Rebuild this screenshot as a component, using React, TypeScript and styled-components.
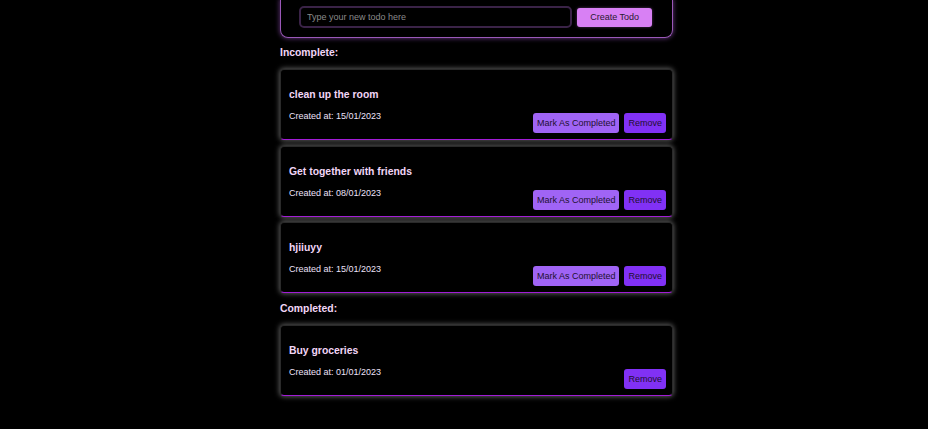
import React from "react";
import styled, { createGlobalStyle } from "styled-components";

const Global = createGlobalStyle`
  html, body { margin: 0; padding: 0; background: #000; }
  body { font-family: "Liberation Sans", Arial, sans-serif; overflow: hidden; }
`;

const Page = styled.div`
  width: 928px;
  height: 429px;
  background: #000;
  display: flex;
  justify-content: center;
`;

const Column = styled.div`
  width: 393px;
  margin-left: 25px;
  display: flex;
  flex-direction: column;
`;

const FormPanel = styled.form`
  display: flex;
  align-items: center;
  gap: 5px;
  padding: 6px 20px 9px 18px;
  border: 1px solid #9a58b8;
  border-top: none;
  border-radius: 0 0 8px 8px;
  box-shadow: 0 0 4px 1px rgba(170, 90, 210, 0.45);
  margin: 0 0 8px;
`;

const TodoInput = styled.input`
  box-sizing: border-box;
  width: 274px;
  height: 22px;
  background: #000;
  border: 2px solid #3a2347;
  border-radius: 5px;
  padding: 0 6px;
  color: #ddd;
  font-family: "Liberation Sans", Arial, sans-serif;
  font-size: 9px;
  outline: none;
  &::placeholder { color: #8a8a8a; }
`;

const CreateButton = styled.button`
  box-sizing: border-box;
  width: 75px;
  height: 19px;
  border: none;
  border-radius: 3px;
  background: #d880f4;
  color: #2a1a30;
  font-family: "Liberation Sans", Arial, sans-serif;
  font-size: 9px;
  padding: 0;
  box-shadow: 0 0 3px rgba(216, 128, 244, 0.4);
`;

const SectionTitle = styled.h2<{ $top: number }>`
  margin: ${(p) => p.$top}px 0 9px 0;
  font-size: 10.4px;
  line-height: 14px;
  font-weight: bold;
  color: #f2d6f7;
`;

const List = styled.div`
  display: flex;
  flex-direction: column;
  gap: 5.5px;
`;

const Card = styled.div`
  box-sizing: border-box;
  height: 71px;
  display: flex;
  justify-content: space-between;
  align-items: flex-end;
  padding: 18px 6px 6px 8px;
  background: #000;
  border: 1px solid #2a2a2a;
  border-bottom: 1px solid #a21cd6;
  border-radius: 4px;
  box-shadow: 0 0 5px 1px rgba(160, 160, 160, 0.55);
`;

const Info = styled.div`
  align-self: flex-start;
  display: flex;
  flex-direction: column;
`;

const TodoTitle = styled.h3`
  margin: 0 0 8px;
  font-size: 10.4px;
  line-height: 14px;
  font-weight: bold;
  color: #f2d6f7;
`;

const DateText = styled.p`
  margin: 0;
  font-size: 9px;
  line-height: 12px;
  color: #ece2f8;
`;

const Actions = styled.div`
  display: flex;
  gap: 5px;
`;

const ActionButton = styled.button<{ $variant: "mark" | "remove" }>`
  height: 20px;
  border: none;
  border-radius: 3px;
  padding: 0 4px;
  font-family: "Liberation Sans", Arial, sans-serif;
  font-size: 9px;
  color: #1e1030;
  background: ${(p) => (p.$variant === "mark" ? "#a064f5" : "#8131f5")};
`;

type Todo = { title: string; date: string };

const incomplete: Todo[] = [
  { title: "clean up the room", date: "15/01/2023" },
  { title: "Get together with friends", date: "08/01/2023" },
  { title: "hjiiuyy", date: "15/01/2023" },
];

const completed: Todo[] = [{ title: "Buy groceries", date: "01/01/2023" }];

function TodoCard({ todo, done }: { todo: Todo; done?: boolean }) {
  return (
    <Card>
      <Info>
        <TodoTitle>{todo.title}</TodoTitle>
        <DateText>Created at: {todo.date}</DateText>
      </Info>
      <Actions>
        {!done && <ActionButton $variant="mark">Mark As Completed</ActionButton>}
        <ActionButton $variant="remove">Remove</ActionButton>
      </Actions>
    </Card>
  );
}

export default function App() {
  return (
    <>
      <Global />
      <Page>
        <Column>
          <FormPanel onSubmit={(e) => e.preventDefault()}>
            <TodoInput placeholder="Type your new todo here" />
            <CreateButton type="submit">Create Todo</CreateButton>
          </FormPanel>
          <SectionTitle $top={0}>Incomplete:</SectionTitle>
          <List>
            {incomplete.map((t, i) => (
              <TodoCard key={i} todo={t} />
            ))}
          </List>
          <SectionTitle $top={9}>Completed:</SectionTitle>
          <List>
            {completed.map((t, i) => (
              <TodoCard key={i} todo={t} done />
            ))}
          </List>
        </Column>
      </Page>
    </>
  );
}
